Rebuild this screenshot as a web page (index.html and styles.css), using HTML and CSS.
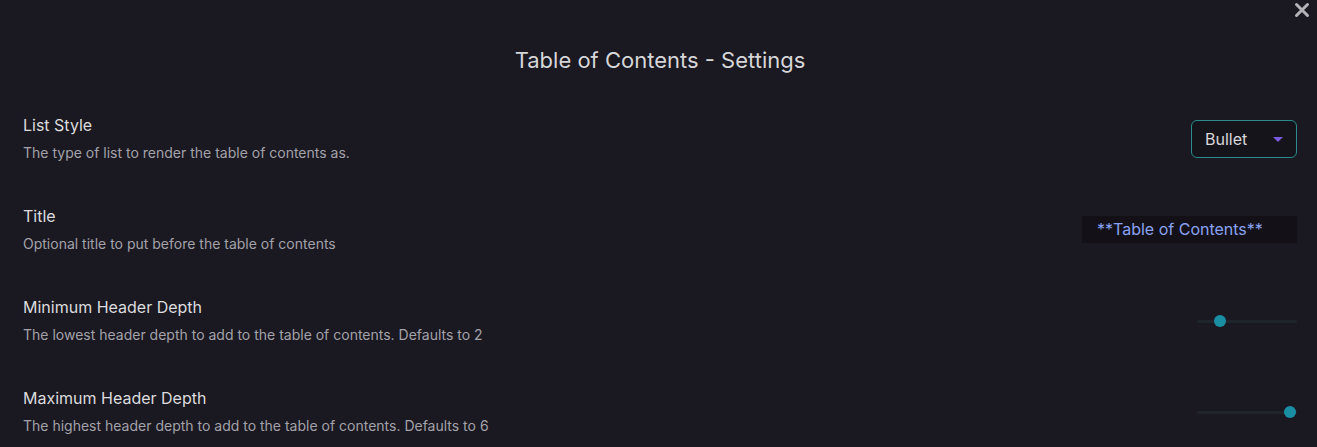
FILE: index.html
```html
<!DOCTYPE html>
<html>
<head>
<meta charset="utf-8">
<link rel="stylesheet" href="styles.css">
</head>
<body>
<div class="modal">
  <button class="close" aria-label="Close">
    <svg width="16" height="16" viewBox="0 0 16 16"><path d="M2.5 2.5 L13.5 13.5 M13.5 2.5 L2.5 13.5" stroke="#b4b4b8" stroke-width="3" stroke-linecap="round"/></svg>
  </button>
  <h1 class="title">Table of Contents - Settings</h1>
  <div class="settings">
    <div class="row">
      <div class="info">
        <div class="name">List Style</div>
        <div class="desc">The type of list to render the table of contents as.</div>
      </div>
      <div class="control">
        <div class="select"><span>Bullet</span><span class="arrow"></span></div>
      </div>
    </div>
    <div class="row">
      <div class="info">
        <div class="name">Title</div>
        <div class="desc">Optional title to put before the table of contents</div>
      </div>
      <div class="control">
        <div class="textinput">**Table of Contents**</div>
      </div>
    </div>
    <div class="row">
      <div class="info">
        <div class="name">Minimum Header Depth</div>
        <div class="desc">The lowest header depth to add to the table of contents. Defaults to 2</div>
      </div>
      <div class="control">
        <div class="slider"><div class="track"></div><div class="thumb" style="left:23px"></div></div>
      </div>
    </div>
    <div class="row">
      <div class="info">
        <div class="name">Maximum Header Depth</div>
        <div class="desc">The highest header depth to add to the table of contents. Defaults to 6</div>
      </div>
      <div class="control">
        <div class="slider"><div class="track"></div><div class="thumb" style="left:93px"></div></div>
      </div>
    </div>
  </div>
</div>
</body>
</html>
```
FILE: styles.css
```css
html, body {
  margin: 0;
  padding: 0;
  background: #1a1820;
  height: 100%;
  overflow: hidden;
}
body {
  font-family: Inter, "Noto Sans", sans-serif;
  color: #dcdcde;
}
.modal {
  position: relative;
  padding: 0 20px 0 23px;
}
.close {
  position: absolute;
  top: 2px;
  right: 7px;
  background: none;
  border: 0;
  padding: 0;
  width: 16px;
  height: 16px;
  cursor: pointer;
}
.title {
  margin: 0;
  padding-top: 45px;
  padding-bottom: 18px;
  text-align: center;
  font-size: 22px;
  font-weight: 400;
  line-height: 30px;
  color: #d6d6d9;
}
.settings {
  display: flex;
  flex-direction: column;
}
.row {
  display: flex;
  align-items: center;
  justify-content: space-between;
  height: 91px;
}
.info {
  display: flex;
  flex-direction: column;
  gap: 9px;
}
.name {
  font-size: 16px;
  line-height: 19px;
  color: #dcdcde;
}
.desc {
  font-size: 14px;
  line-height: 17px;
  color: #a3a2aa;
}
.control {
  display: flex;
  align-items: center;
}
.select {
  width: 106px;
  height: 38px;
  box-sizing: border-box;
  border: 1px solid #2b8b8c;
  border-radius: 6px;
  background: #16141b;
  display: flex;
  align-items: center;
  justify-content: space-between;
  padding: 0 13px 0 13px;
  font-size: 16px;
  color: #d8d8da;
}
.arrow {
  width: 0;
  height: 0;
  border-left: 5px solid transparent;
  border-right: 5px solid transparent;
  border-top: 5px solid #7a5be0;
  margin-top: 1px;
}
.textinput {
  width: 215px;
  height: 27px;
  box-sizing: border-box;
  background: #131117;
  padding: 0 15px;
  font-size: 16px;
  line-height: 27px;
  color: #8aa2f2;
}
.slider {
  position: relative;
  width: 100px;
  height: 12px;
}
.track {
  position: absolute;
  left: 0;
  right: 0;
  top: 5px;
  height: 3px;
  background: #20252b;
  border-radius: 2px;
}
.thumb {
  position: absolute;
  top: 0;
  width: 12px;
  height: 12px;
  margin-left: -6px;
  border-radius: 50%;
  background: #1a8fa3;
}
```
